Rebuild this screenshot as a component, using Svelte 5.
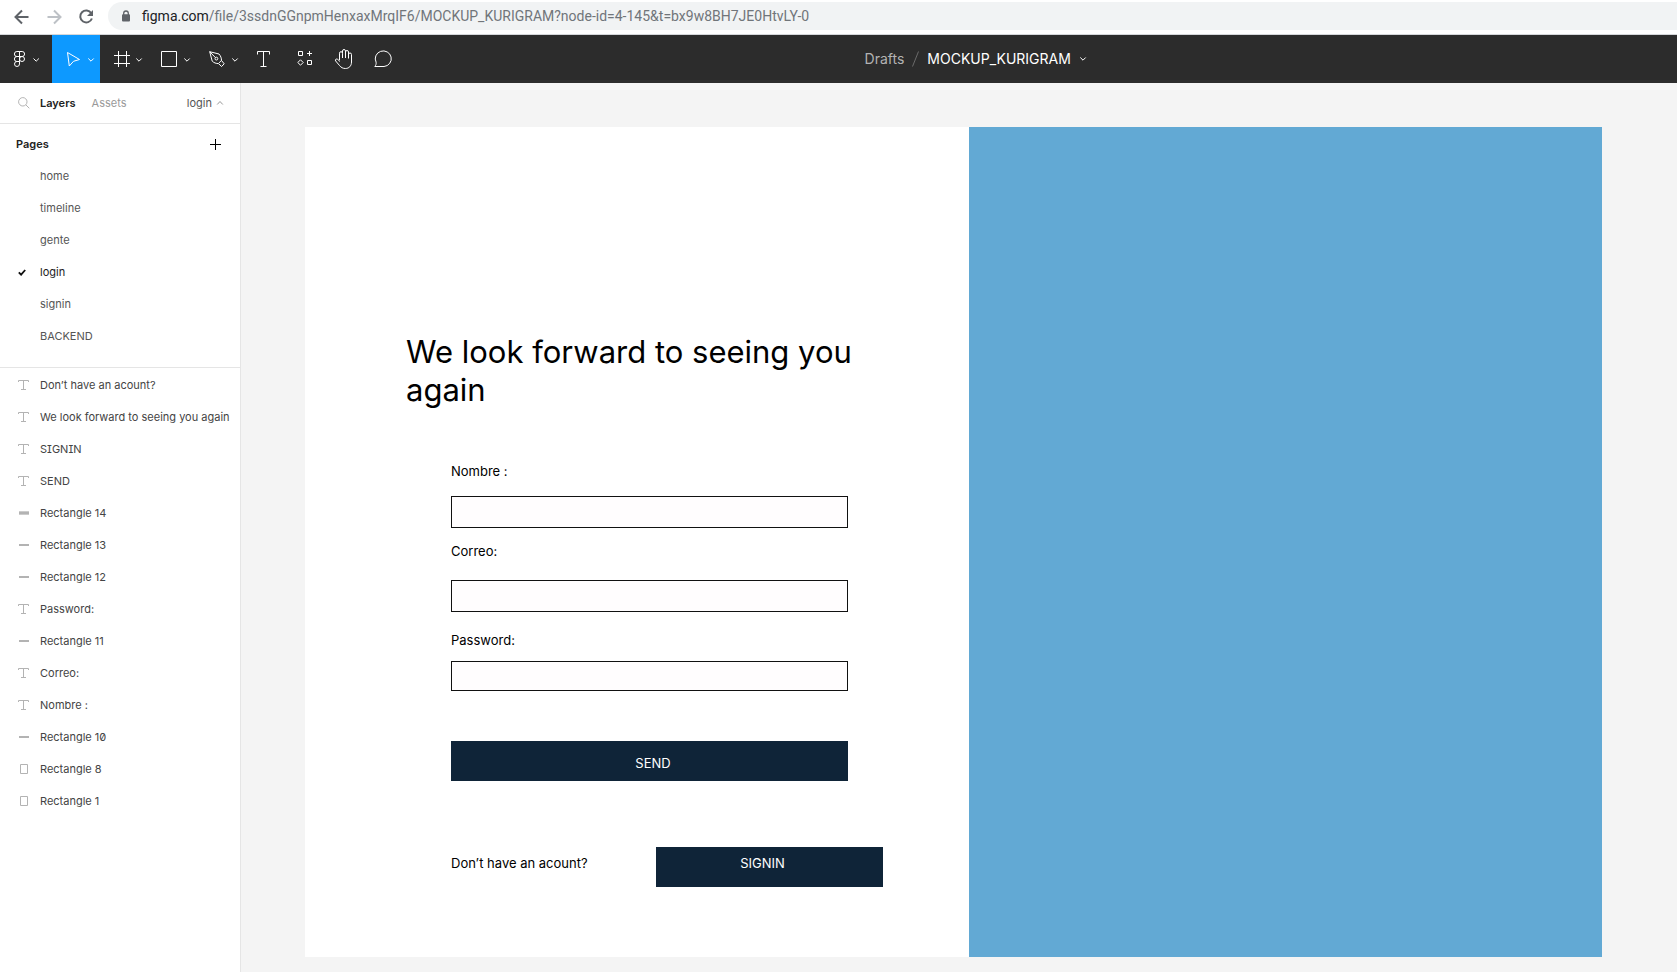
<script>
  const pages = ['home', 'timeline', 'gente', 'login', 'signin', 'BACKEND'];
  const layers = [
    { kind: 'text', name: 'Don’t have an acount?' },
    { kind: 'text', name: 'We look forward to seeing you again' },
    { kind: 'text', name: 'SIGNIN' },
    { kind: 'text', name: 'SEND' },
    { kind: 'bar', name: 'Rectangle 14' },
    { kind: 'line', name: 'Rectangle 13' },
    { kind: 'line', name: 'Rectangle 12' },
    { kind: 'text', name: 'Password:' },
    { kind: 'line', name: 'Rectangle 11' },
    { kind: 'text', name: 'Correo:' },
    { kind: 'text', name: 'Nombre :' },
    { kind: 'line', name: 'Rectangle 10' },
    { kind: 'box', name: 'Rectangle 8' },
    { kind: 'box', name: 'Rectangle 1' }
  ];
  let current = $state('login');
  let tool = $state('move');
  let nombre = $state('');
  let correo = $state('');
  let password = $state('');
</script>

<div class="window">
  <header class="browser">
    <button class="nav" aria-label="Back">
      <svg width="16" height="16" viewBox="0 0 16 16"><path d="M14.5 8H2M8 1.5 1.5 8 8 14.5" stroke="#5f6368" stroke-width="2" fill="none" /></svg>
    </button>
    <button class="nav" aria-label="Forward">
      <svg width="16" height="16" viewBox="0 0 16 16"><path d="M1.500 8H14M8 1.500 14.500 8 8 14.500" stroke="#bdc1c6" stroke-width="2" fill="none" /></svg>
    </button>
    <button class="nav" aria-label="Reload">
      <svg width="16" height="16" viewBox="0 0 16 16"><path d="M13.300 4.200A6 6 0 1 0 13.900 9.500" stroke="#5f6368" stroke-width="2" fill="none" /><path d="M15 1v6H9z" fill="#5f6368" /></svg>
    </button>
    <div class="address">
      <svg width="10" height="12" viewBox="0 0 10 12"><path d="M2.700 5V3.300a2.300 2.300 0 0 1 4.600 0V5" stroke="#5f6368" stroke-width="1.300" fill="none" /><rect x="1" y="4.200" width="8" height="7.300" rx="1" fill="#5f6368" /></svg>
      <span class="url"><b>figma.com</b>/file/3ssdnGGnpmHenxaxMrqIF6/MOCKUP_KURIGRAM?node-id=4-145&amp;t=bx9w8BH7JE0HtvLY-0</span>
    </div>
  </header>

  <div class="toolbar">
    <button class="tool first" aria-label="Main menu">
      <svg width="52" height="48" viewBox="0 0 52 48">
        <path d="M19.500 16.500h-2.600a2.500 2.500 0 0 0 0 5h2.600zM19.500 16.500h2.600a2.500 2.500 0 0 1 0 5h-2.600zM19.500 21.500h-2.600a2.500 2.500 0 0 0 0 5h2.600zM19.500 26.500h-2.600a2.500 2.500 0 1 0 2.600 2.500z" />
        <circle cx="22" cy="24" r="2.500" />
        <path d="m33.500 23.500 2.700 2.700 2.700-2.700" />
      </svg>
    </button>
    <button class="tool wide" class:active={tool === 'move'} aria-label="Move" onclick={() => (tool = 'move')}>
      <svg width="48" height="48" viewBox="0 0 48 48"><path d="m15.500 17.500 12 7-6 1.800-4.200 4.700z" /><path d="m36.300 23.500 2.700 2.700 2.700-2.700" /></svg>
    </button>
    <button class="tool wide" class:active={tool === 'frame'} aria-label="Frame" onclick={() => (tool = 'frame')}>
      <svg width="48" height="48" viewBox="0 0 48 48"><path d="M18.500 16v16M26.500 16v16M14 20.500h16M14 28.500h16" /><path d="m36.300 23.500 2.700 2.700 2.700-2.700" /></svg>
    </button>
    <button class="tool wide" class:active={tool === 'shape'} aria-label="Rectangle" onclick={() => (tool = 'shape')}>
      <svg width="48" height="48" viewBox="0 0 48 48"><path d="M13.500 16.500h15v15h-15z" /><path d="m36.300 23.500 2.700 2.700 2.700-2.700" /></svg>
    </button>
    <button class="tool wide" class:active={tool === 'pen'} aria-label="Pen" onclick={() => (tool = 'pen')}>
      <svg width="48" height="48" viewBox="0 0 48 48">
        <path d="m13.700 16.700 9.300 2.300c1.800 2 2.500 4.300 2.500 6.500l2.700 3.300-2.600 2.700-3.100-2.900c-2.300 0-4.700-.8-6.300-2.500zM13.700 16.700l5.800 6M22.700 28.200l2.900-2.900" />
        <circle cx="20.400" cy="23.600" r="1.400" />
        <path d="m36.300 23.500 2.700 2.700 2.700-2.700" />
      </svg>
    </button>
    <button class="tool" aria-label="Text">
      <svg width="40" height="48" viewBox="0 0 40 48"><path d="M13.500 19.500v-3h12v3M19.500 16.500v15M16.500 31.500h6" /></svg>
    </button>
    <button class="tool" aria-label="Resources">
      <svg width="40" height="48" viewBox="0 0 40 48"><path d="M14.500 16.500h4v4h-4zM23.500 25.500h4v4h-4zM25.500 16v5M23 18.500h5M16.500 24.800l2.700 2.700-2.700 2.700-2.700-2.700z" /></svg>
    </button>
    <button class="tool" aria-label="Hand">
      <svg width="40" height="48" viewBox="0 0 40 48"><path d="M15.500 25v-6.800a1.500 1.500 0 0 1 3 0V23M18.500 18v-2a1.500 1.500 0 0 1 3 0v7M21.500 17a1.500 1.500 0 0 1 3 0v6.500M24.500 19.500a1.500 1.500 0 0 1 3 0V27c0 4-2.600 6.500-6 6.500-2.700 0-4.400-1-5.900-2.900L11.700 26c-1-1.300.6-2.600 1.900-1.700l2.400 2.200" /></svg>
    </button>
    <button class="tool" aria-label="Comment">
      <svg width="40" height="48" viewBox="0 0 40 48"><path d="M10.800 31.500c1.200-1.400 1.500-2.500 1.300-4.300A8 7.800 0 1 1 20 31.500z" /></svg>
    </button>
    <div class="before"></div>
    <nav class="crumbs">
      <a href="#drafts">Drafts</a>
      <svg width="9" height="16" viewBox="0 0 9 16"><path d="M1.500 15.500 7.500.5" stroke="#6b6b6b" /></svg>
      <button class="file">MOCKUP_KURIGRAM
        <svg width="8" height="6" viewBox="0 0 8 6"><path d="m1.300 1.500 2.700 2.700 2.700-2.700" /></svg>
      </button>
    </nav>
    <div class="after"></div>
  </div>

  <div class="work">
    <aside>
      <div class="tabs">
        <svg width="12" height="12" viewBox="0 0 12 12"><circle cx="4.800" cy="4.800" r="4.200" stroke="#b3b3b3" fill="none" /><path d="m7.800 7.800 3.500 3.500" stroke="#b3b3b3" /></svg>
        <button class="tab on">Layers</button>
        <button class="tab">Assets</button>
        <button class="tab page">login
          <svg width="8" height="6" viewBox="0 0 8 6"><path d="m1.200 4.500 2.800-3 2.800 3" stroke="#999" fill="none" /></svg>
        </button>
      </div>
      <section class="pages">
        <div class="title">
          <h2>Pages</h2>
          <button aria-label="Add page"><svg width="11" height="11" viewBox="0 0 11 11"><path d="M5.500 0v11M0 5.500h11" stroke="#000" /></svg></button>
        </div>
        {#each pages as page}
          <button class="row" class:current={page === current} onclick={() => (current = page)}>
            <span class="mark">
              {#if page === current}
                <svg width="8" height="7" viewBox="0 0 8 7"><path d="m.8 3.300 2.300 2.400L7.200 1" stroke="#111" stroke-width="1.800" fill="none" /></svg>
              {/if}
            </span>
            {page}
          </button>
        {/each}
      </section>
      <section class="layers">
        {#each layers as layer}
          <button class="row">
            <span class="mark">
              <svg width="12" height="12" viewBox="0 0 12 12" fill="none" stroke="#b3b3b3">
                {#if layer.kind === 'text'}
                  <path d="M.5 3V1.500h10V3M5.500 1.500v9M3 10.500h5" />
                {:else if layer.kind === 'bar'}
                  <path d="M1 6h10" stroke="#ccc" stroke-width="4" /><path d="M1 6h10" stroke-width="2" />
                {:else if layer.kind === 'line'}
                  <path d="M1 6h10" stroke-width="2" />
                {:else}
                  <path d="M2.500 1.500h7v9h-7z" />
                {/if}
              </svg>
            </span>
            {layer.name}
          </button>
        {/each}
      </section>
    </aside>

    <main>
      <div class="frame">
        <form onsubmit={(e) => e.preventDefault()}>
          <h1>We look forward to seeing you again</h1>
          <div class="fields">
            <label for="nombre">Nombre :</label>
            <input id="nombre" type="text" bind:value={nombre} />
            <label class="correo" for="correo">Correo:</label>
            <input id="correo" type="email" bind:value={correo} />
            <label class="password" for="password">Password:</label>
            <input id="password" type="password" bind:value={password} />
            <button class="send">SEND</button>
          </div>
          <div class="signup">
            <span>Don’t have an acount?</span>
            <button type="button" class="signin">SIGNIN</button>
          </div>
        </form>
        <div class="panel"></div>
      </div>
    </main>
  </div>
</div>

<style>
  :global(body) {
    margin: 0;
  }
  .window {
    min-height: 100vh;
    display: flex;
    flex-direction: column;
    font-family: Inter, 'Liberation Sans', sans-serif;
    font-size: 11px;
    color: #333;
    background: #fff;
  }
  button {
    margin: 0;
    padding: 0;
    border: 0;
    background: none;
    font: inherit;
    color: inherit;
  }
  svg {
    display: block;
    flex: none;
  }

  .browser {
    display: flex;
    align-items: center;
    gap: 16px;
    height: 34px;
    padding-left: 14px;
    border-bottom: 1px solid #d5d7da;
  }
  .nav {
    display: flex;
  }
  .address {
    flex: 1;
    display: flex;
    align-items: center;
    gap: 11px;
    height: 28px;
    margin-bottom: 2px;
    padding-left: 13px;
    margin-left: -2px;
    border-radius: 14px 0 0 14px;
    background: #f1f3f4;
  }
  .url {
    font: 14px/28px Roboto, 'Open Sans', sans-serif;
    color: #70757a;
    white-space: nowrap;
  }
  .url b {
    font-weight: 400;
    color: #202124;
  }

  .toolbar {
    display: flex;
    align-items: center;
    height: 48px;
    background: #2c2c2c;
    color: #fff;
  }
  .toolbar svg {
    fill: none;
    stroke: #fff;
  }
  .tool {
    flex: none;
  }
  .active {
    background: #0d99ff;
  }
  .before {
    flex: 462;
  }
  .after {
    flex: 592;
  }
  .crumbs {
    display: flex;
    align-items: center;
    gap: 7px;
    font-size: 14px;
    line-height: 24px;
  }
  .crumbs a {
    color: #b3b3b3;
    text-decoration: none;
  }
  .crumbs > svg {
    stroke: #6b6b6b;
  }
  .file {
    display: flex;
    align-items: center;
    gap: 8px;
  }

  .work {
    flex: 1;
    display: flex;
  }
  aside {
    flex: none;
    width: 240px;
    border-right: 1px solid #e5e5e5;
  }
  .tabs {
    display: flex;
    align-items: center;
    height: 40px;
    padding: 0 16px 0 18px;
    border-bottom: 1px solid #e5e5e5;
  }
  .tab {
    margin-left: 16px;
    color: #999;
  }
  .tab.on {
    margin-left: 10px;
    font-weight: 600;
    color: #222;
  }
  .tab.page {
    display: flex;
    align-items: center;
    gap: 4px;
    margin-left: auto;
    color: #555;
  }
  .pages {
    padding: 4px 0 15px;
    border-bottom: 1px solid #e5e5e5;
  }
  .title {
    display: flex;
    align-items: center;
    justify-content: space-between;
    height: 32px;
    padding: 0 19px 0 16px;
  }
  h2 {
    margin: 0;
    font-size: 11px;
    font-weight: 600;
    color: #222;
  }
  .row {
    display: flex;
    align-items: center;
    width: 100%;
    height: 32px;
    padding-left: 18px;
    color: #555;
    white-space: nowrap;
  }
  .row.current {
    color: #222;
  }
  .mark {
    width: 22px;
  }
  .layers {
    padding-top: 1px;
  }
  .layers .row {
    color: #444;
    font-feature-settings: 'zero', 'cv08';
  }

  main {
    flex: 1;
    display: flex;
    padding: 44px 75px 15px 64px;
    background: #f4f4f4;
  }
  .frame {
    flex: 1;
    display: grid;
    grid-template-columns: 664fr 633fr;
    background: #fff;
  }
  form {
    padding: 206px 86px 68px 101px;
    font-size: 13px;
    line-height: 18px;
    color: #000;
  }
  .panel {
    background: #62a9d4;
  }
  h1 {
    max-width: 460px;
    margin: 0 0 53px;
    font-size: 31px;
    line-height: 38px;
    font-weight: 400;
  }
  .fields {
    display: flex;
    flex-direction: column;
    margin: 0 35px 0 45px;
  }
  label {
    margin-bottom: 16px;
  }
  label.correo {
    margin: 14px 0 20px;
  }
  label.password {
    margin: 19px 0 12px;
  }
  input {
    box-sizing: border-box;
    height: 32px;
    padding: 0 8px;
    border: 1px solid #111;
    border-radius: 0;
    background: #fffdfe;
    font: inherit;
  }
  #password {
    height: 30px;
  }
  .send {
    height: 40px;
    margin-top: 50px;
    padding: 3px 0 0 7px;
    background: #0f2438;
    color: #fff;
  }
  .signup {
    display: flex;
    align-items: center;
    justify-content: space-between;
    margin: 66px 0 0 45px;
  }
  .signup span {
    padding-bottom: 8px;
  }
  .signin {
    width: 227px;
    height: 40px;
    padding: 0 14px 8px 0;
    background: #0f2438;
    color: #fff;
  }
</style>
